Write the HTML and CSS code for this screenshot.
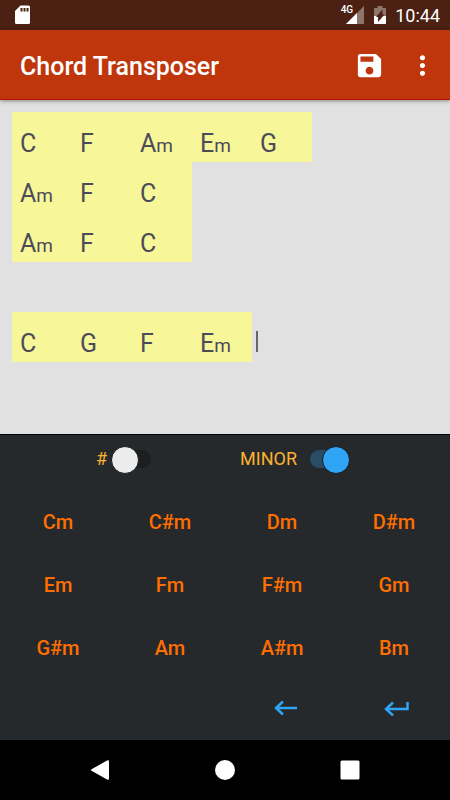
FILE: index.html
```html
<!DOCTYPE html>
<html lang="en">
<head>
<meta charset="utf-8">
<meta name="viewport" content="width=device-width, initial-scale=1">
<title>Chord Transposer</title>
<link rel="stylesheet" href="styles.css">
</head>
<body>
<div class="status">
  <svg class="status-sd" width="16" height="20" viewBox="0 0 16 20" aria-hidden="true"><path fill="#fff" d="M5.500 0.500H13.500Q15 0.500 15 2V17.500Q15 19 13.500 19H1.500Q0 19 0 17.500V6Z"/><path fill="#4a2112" d="M5.500 3h2v3.500h-2zM8.500 3h2v3.500h-2zM11.500 3h2v3.500h-2z"/></svg>
  <div class="status-right">
    <span class="network">4G</span>
    <svg class="signal" width="18" height="18" viewBox="0 0 18 18" aria-hidden="true"><path fill="#8d756c" d="M18 0V18H0Z"/><path fill="#fff" d="M11 7V18H0Z"/></svg>
    <svg class="battery" width="12" height="18" viewBox="0 0 12 18" aria-hidden="true"><path fill="#8d756c" d="M3.500 0h5v2H11q1 0 1 1v7H0V3q0-1 1-1h2.500z"/><path fill="#fff" d="M0 10h12v7q0 1-1 1H1q-1 0-1-1z"/><path fill="#4a2112" d="M8.500 3.500v5h2L4 16v-5H2z"/></svg>
    <span class="clock">10:44</span>
  </div>
</div>
<header class="appbar">
  <h1 class="title">Chord Transposer</h1>
  <button class="icon-button" type="button" aria-label="Save"><svg width="31" height="31" viewBox="0 0 24 24"><path fill="#fff" d="M17 3H5a2 2 0 0 0-2 2v14a2 2 0 0 0 2 2h14c1.100 0 2-.9 2-2V7l-4-4zm-5 16c-1.660 0-3-1.340-3-3s1.340-3 3-3 3 1.340 3 3-1.340 3-3 3zm3-10H5V5h10v4z"/></svg></button>
  <button class="icon-button" type="button" aria-label="More options"><svg width="31" height="31" viewBox="0 0 24 24"><path fill="#fff" d="M12 8c1.100 0 2-.9 2-2s-.9-2-2-2-2 .9-2 2 .9 2 2 2zm0 2c-1.100 0-2 .9-2 2s.9 2 2 2 2-.9 2-2-.9-2-2-2zm0 6c-1.100 0-2 .9-2 2s.9 2 2 2 2-.9 2-2-.9-2-2-2z"/></svg></button>
</header>
<main class="sheet">
  <div class="line"><span class="chord">C</span><span class="chord">F</span><span class="chord">A<small>m</small></span><span class="chord">E<small>m</small></span><span class="chord">G</span></div>
  <div class="line"><span class="chord">A<small>m</small></span><span class="chord">F</span><span class="chord">C</span></div>
  <div class="line"><span class="chord">A<small>m</small></span><span class="chord">F</span><span class="chord">C</span></div>
  <div class="line"></div>
  <div class="line"><span class="chord">C</span><span class="chord">G</span><span class="chord">F</span><span class="chord">E<small>m</small></span><span class="caret"></span></div>
</main>
<section class="keyboard" aria-label="Chord keyboard">
  <div class="toggles">
    <div class="toggle"><label for="sharp">#</label><input class="switch" id="sharp" type="checkbox"></div>
    <div class="toggle toggle-minor"><label for="minor">MINOR</label><input class="switch" id="minor" type="checkbox" checked></div>
  </div>
  <div class="keys">
    <button class="key" type="button">Cm</button>
    <button class="key" type="button">C#m</button>
    <button class="key" type="button">Dm</button>
    <button class="key" type="button">D#m</button>
    <button class="key" type="button">Em</button>
    <button class="key" type="button">Fm</button>
    <button class="key" type="button">F#m</button>
    <button class="key" type="button">Gm</button>
    <button class="key" type="button">G#m</button>
    <button class="key" type="button">Am</button>
    <button class="key" type="button">A#m</button>
    <button class="key" type="button">Bm</button>
    <button class="key key-back" type="button" aria-label="Backspace"><svg width="24" height="16" viewBox="0 0 24 16"><path d="M23 8H2M9 1.500L2 8l7 6.500"/></svg></button>
    <button class="key key-enter" type="button" aria-label="New line"><svg width="26" height="16" viewBox="0 0 26 16"><path d="M23.500 2v7H2M9 2.500L2 9l7 6.500"/></svg></button>
  </div>
</section>
<nav class="navbar" aria-label="System navigation">
  <button class="nav-button" type="button" aria-label="Back"><svg width="20" height="20" viewBox="0 0 20 20"><path fill="#fff" d="M17.500 0.300Q19 -0.300 19 1.200V18.800Q19 20.300 17.500 19.700L1.500 10.800Q0.500 10 1.500 9.200Z"/></svg></button>
  <button class="nav-button" type="button" aria-label="Home"><svg width="20" height="20" viewBox="0 0 20 20"><circle cx="10" cy="10" r="10" fill="#fff"/></svg></button>
  <button class="nav-button" type="button" aria-label="Recent apps"><svg width="20" height="20" viewBox="0 0 20 20"><rect x="0.500" y="0.500" width="19" height="19" rx="1.500" fill="#fff"/></svg></button>
</nav>
</body>
</html>
```
FILE: styles.css
```css
* {
  box-sizing: border-box;
}

body {
  margin: 0;
  min-height: 100vh;
  display: flex;
  flex-direction: column;
  font-family: Roboto, "Liberation Sans", sans-serif;
  background: #e1e1e1;
}

button {
  border: 0;
  padding: 0;
  background: none;
  font: inherit;
  color: inherit;
  display: flex;
  align-items: center;
  justify-content: center;
}

.status {
  height: 30px;
  display: flex;
  align-items: center;
  justify-content: space-between;
  padding: 0 10px 0 15px;
  background: #4a2112;
  color: #fff;
}

.status-right {
  display: flex;
  align-items: center;
}

.network {
  align-self: flex-start;
  padding-top: 2px;
  font-size: 10px;
  line-height: 12px;
  font-weight: 500;
}

.signal {
  margin-left: -7px;
}

.battery {
  margin: 0 9px 0 10px;
}

.clock {
  font-size: 18px;
  line-height: 24px;
  padding-top: 2px;
}

.appbar {
  height: 70px;
  display: flex;
  align-items: center;
  padding: 2px 12px 0 20px;
  gap: 22px;
  background: #bf360c;
  border-bottom: 1px solid #b01500;
  box-shadow: 0 1px 4px rgba(0, 0, 0, 0.4);
  color: #fff;
}

.title {
  flex: 1;
  margin: 0;
  font-size: 25px;
  line-height: 32px;
  font-weight: 500;
  padding-top: 2px;
}

.sheet {
  flex: 1;
  padding: 12px;
  color: #4c4c58;
}

.line {
  display: flex;
  align-items: center;
  height: 50px;
}

.chord {
  width: 60px;
  height: 50px;
  padding: 7px 0 0 8px;
  background: #f7f698;
  font-size: 25px;
  line-height: 50px;
  font-weight: 400;
}

.chord small {
  font-size: 19px;
}

.caret {
  width: 2px;
  height: 21px;
  margin: 8px 0 0 4px;
  background: #666;
}

.keyboard {
  background: #25292c;
  border-top: 1px solid #000;
}

.toggles {
  height: 48px;
  display: grid;
  grid-template-columns: 1fr 1fr;
  color: #fbb32f;
  font-size: 18px;
  line-height: 24px;
}

.toggle {
  display: flex;
  align-items: center;
  justify-content: flex-end;
  gap: 4px;
  padding-right: 74px;
}

.toggle-minor {
  gap: 13px;
  padding-right: 100px;
}

.switch {
  appearance: none;
  position: relative;
  width: 40px;
  height: 26px;
  margin: 0;
}

.switch::before {
  content: "";
  position: absolute;
  inset: 4px 0;
  border-radius: 9px;
  background: #1c1e1f;
}

.switch::after {
  content: "";
  position: absolute;
  top: 0;
  left: 0;
  width: 26px;
  height: 26px;
  border-radius: 50%;
  background: #ececec;
  border: 1px solid #15181a;
}

.switch:checked::before {
  background: #294d67;
}

.switch:checked::after {
  left: auto;
  right: 0;
  background: #31a5f5;
}

.keys {
  display: grid;
  grid-template-columns: repeat(4, 1fr);
  grid-template-rows: repeat(3, 63px) 61px;
  padding: 7px 0 0 2px;
}

.key {
  color: #ff6f00;
  font-size: 20px;
  font-weight: 500;
}

.key svg {
  fill: none;
  stroke: #31a5f5;
  stroke-width: 2.5;
}

.key-back {
  grid-column: 3;
  padding: 0 0 4px 7px;
}

.key-enter {
  padding: 0 0 4px 5px;
}

.navbar {
  height: 60px;
  display: flex;
  justify-content: center;
  background: #000;
}

.nav-button {
  width: 125px;
}
```
